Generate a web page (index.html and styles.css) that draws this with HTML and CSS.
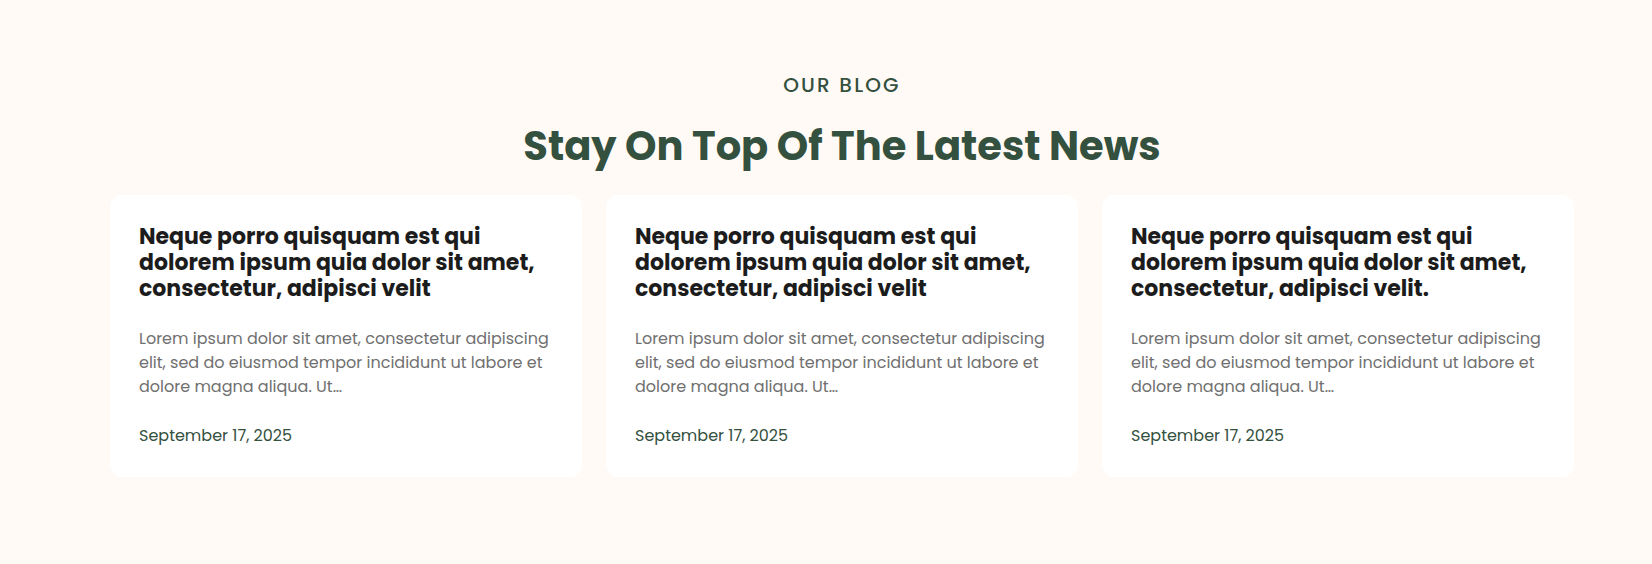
FILE: index.html
```html
<!DOCTYPE html>
<html lang="en">
<head>
  <meta charset="UTF-8" />
  <meta name="viewport" content="width=device-width, initial-scale=1.0"/>
  <title>Our Blog</title>
  <link rel="stylesheet" href="styles.css">
</head>
<body>
  <section class="blog">
    <p class="eyebrow">OUR BLOG</p>
    <h2 class="title">Stay On Top Of The Latest News</h2>
    <div class="posts">
      <article class="post">
        <h3>Neque porro quisquam est qui dolorem ipsum quia dolor sit amet, consectetur, adipisci velit</h3>
        <p class="excerpt">Lorem ipsum dolor sit amet, consectetur adipiscing elit, sed do eiusmod tempor incididunt ut labore et dolore magna aliqua. Ut…</p>
        <p class="date">September 17, 2025</p>
      </article>
      <article class="post">
        <h3>Neque porro quisquam est qui dolorem ipsum quia dolor sit amet, consectetur, adipisci velit</h3>
        <p class="excerpt">Lorem ipsum dolor sit amet, consectetur adipiscing elit, sed do eiusmod tempor incididunt ut labore et dolore magna aliqua. Ut…</p>
        <p class="date">September 17, 2025</p>
      </article>
      <article class="post">
        <h3>Neque porro quisquam est qui dolorem ipsum quia dolor sit amet, consectetur, adipisci velit.</h3>
        <p class="excerpt">Lorem ipsum dolor sit amet, consectetur adipiscing elit, sed do eiusmod tempor incididunt ut labore et dolore magna aliqua. Ut…</p>
        <p class="date">September 17, 2025</p>
      </article>
    </div>
  </section>
</body>
</html>
```

FILE: styles.css
```css
:root {
  --bg: #fffaf5;
  --green: #34503e;
  --ink: #1c1c1c;
  --muted: #707070;
}

body {
  margin: 0;
  font-family: 'Poppins', 'Open Sans', sans-serif;
  background: var(--bg);
}

.blog {
  padding: 72px 78px 60px 110px;
  text-align: center;
}

.eyebrow {
  margin: 0;
  font-size: 20px;
  line-height: 27px;
  font-weight: 500;
  letter-spacing: 2.2px;
  color: var(--green);
}

.title {
  margin: 22px 0 24px;
  font-size: 40px;
  line-height: 50px;
  font-weight: 700;
  color: var(--green);
}

.posts {
  display: grid;
  grid-template-columns: repeat(3, 1fr);
  gap: 24px;
  text-align: left;
}

.post {
  background: #fff;
  border-radius: 12px;
  padding: 29px 29px 29px;
}

.post h3 {
  margin: 0;
  font-size: 22px;
  line-height: 26px;
  font-weight: 700;
  color: var(--ink);
}

.excerpt {
  margin: 25px 0 0;
  font-size: 16px;
  line-height: 24px;
  color: var(--muted);
}

.date {
  margin: 25px 0 0;
  font-size: 16px;
  line-height: 24px;
  color: var(--green);
}
```
